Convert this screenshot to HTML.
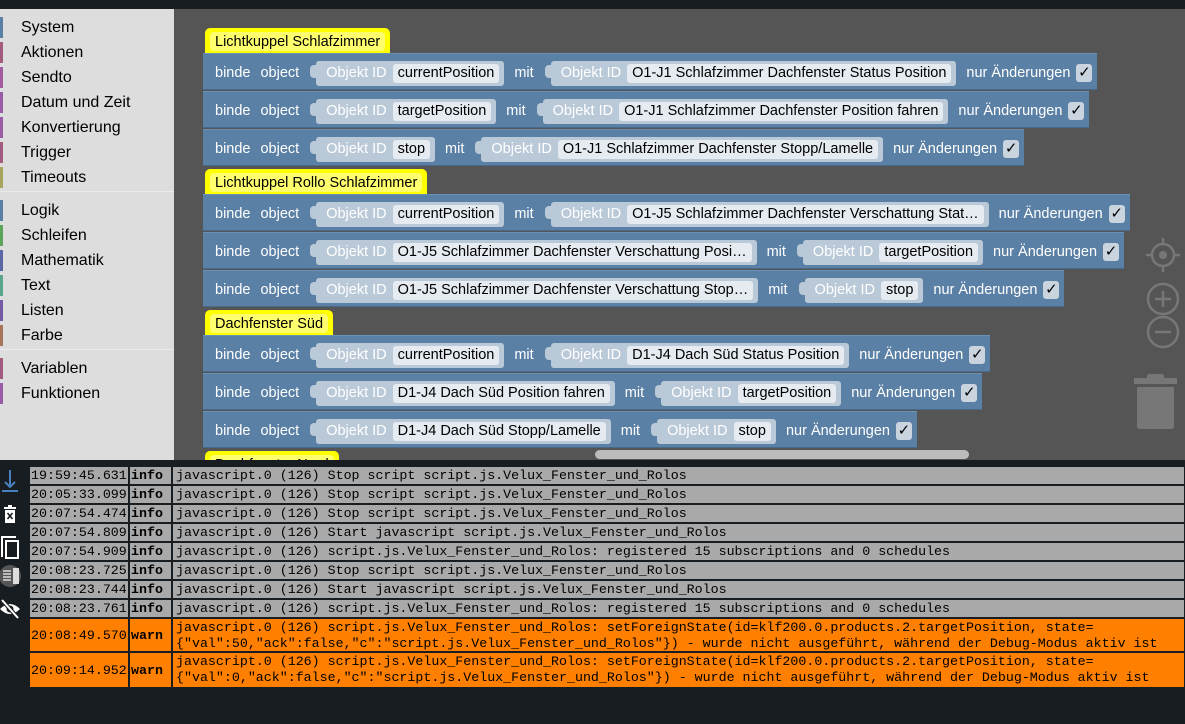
<!DOCTYPE html>
<html><head><meta charset="utf-8"><style>
*{margin:0;padding:0;box-sizing:border-box}
body{width:1185px;height:719px;overflow:hidden;background:#181d21;font-family:"Liberation Sans",Arial,sans-serif;position:relative}
#top{position:absolute;left:0;top:0;width:1185px;height:9px;background:#181d21}
#side{position:absolute;left:0;top:9px;width:174px;height:451px;background:#dddddd}
.it{position:absolute;left:0;height:25px;width:174px;font-size:16px;color:#000;line-height:25px;padding-left:21px}
.it i{position:absolute;left:0;top:2px;width:3px;height:21px}
.sep{position:absolute;left:0;width:174px;height:1px;background:#ebebeb}
#ws{position:absolute;left:174px;top:9px;width:1011px;height:451px;background:#555;overflow:hidden}
.hdr{position:absolute;height:25px;background:#ff0;border-radius:5px 5px 0 0;padding:4px 5px 2px;white-space:nowrap}
.hdr span{display:block;background:#ffff6e;border-radius:4px;height:19px;line-height:20px;padding:0 5px;font-size:14.5px;color:#000}
.row{position:absolute;left:29px;height:37px;background:#5b80a5;border-top:1px solid #6b90b5;border-bottom:1px solid #48698a;display:flex;align-items:center;padding-left:12px;padding-top:3px;color:#fff;font-size:14.5px;white-space:nowrap}
.row>*{flex-shrink:0}
.w{margin-right:10px}
.f{position:relative;height:25px;background:#bac9d8;border-radius:3px;display:flex;align-items:center;padding:0 5px 0 10px;margin-left:7px;margin-right:10px}
.f:before{content:"";position:absolute;left:-6px;top:4px;width:6px;height:13px;background:#bac9d8;border-radius:4px 0 0 4px}
.f b{font-weight:normal;color:#fff;margin-right:6px}
.f u{text-decoration:none;background:#e5ebf1;color:#000;border-radius:3px;padding:0 5px;height:19px;line-height:19px}
.ck{display:inline-block;width:16px;height:18px;background:#c9d4df;border-radius:3px;color:#000;font-size:15px;line-height:18px;text-align:center;margin-left:6px;margin-right:5px}
#scroll{position:absolute;left:421px;top:441px;width:374px;height:9px;background:#bbb;border-radius:5px}
#log{position:absolute;left:0;top:461px;width:1185px;height:258px;background:#181d21}
#icons{position:absolute;left:0;top:0;width:29px;height:258px;background:#181d21}
.lr{position:absolute;left:30px;display:flex;font-family:"Liberation Mono","Courier New",monospace;font-size:13.3px;color:#000}
.lr div{background:#a9a9a9;margin-right:2px;padding-left:1px;display:flex;align-items:center;white-space:pre;overflow:hidden}
.lr .t{width:98px}.lr .l{width:41px;font-weight:bold}.lr .m{width:1011px;margin-right:0;padding-left:3px}
.lr.wn div{background:#ff8000}
.lr.wn .m{line-height:16px;align-items:flex-start;padding-top:1px}
</style></head><body>
<div id="top"></div>
<div id="side">
<div class="it" style="top:6px"><i style="background:#5b80a5"></i>System</div>
<div class="it" style="top:31px"><i style="background:#a55b80"></i>Aktionen</div>
<div class="it" style="top:56px"><i style="background:#a55ba0"></i>Sendto</div>
<div class="it" style="top:81px"><i style="background:#995ba5"></i>Datum und Zeit</div>
<div class="it" style="top:106px"><i style="background:#9a5ba5"></i>Konvertierung</div>
<div class="it" style="top:131px"><i style="background:#a55b80"></i>Trigger</div>
<div class="it" style="top:156px"><i style="background:#a5a55b"></i>Timeouts</div>
<div class="sep" style="top:182px"></div>
<div class="it" style="top:189px"><i style="background:#5b80a5"></i>Logik</div>
<div class="it" style="top:214px"><i style="background:#5ba55b"></i>Schleifen</div>
<div class="it" style="top:239px"><i style="background:#5b67a5"></i>Mathematik</div>
<div class="it" style="top:264px"><i style="background:#5ba58c"></i>Text</div>
<div class="it" style="top:289px"><i style="background:#745ba5"></i>Listen</div>
<div class="it" style="top:314px"><i style="background:#a5745b"></i>Farbe</div>
<div class="sep" style="top:340px"></div>
<div class="it" style="top:347px"><i style="background:#a55b80"></i>Variablen</div>
<div class="it" style="top:372px"><i style="background:#995ba5"></i>Funktionen</div>
</div>
<div id="ws">
<div class="hdr" style="left:31px;top:19px"><span>Lichtkuppel Schlafzimmer</span></div>
<div class="row" style="top:44px"><span class="w">binde</span><span class="w">object</span><div class="f"><b>Objekt ID</b><u>currentPosition</u></div><span class="w">mit</span><div class="f"><b>Objekt ID</b><u>O1-J1 Schlafzimmer Dachfenster Status Position</u></div><span>nur Änderungen</span><span class="ck">✓</span></div>
<div class="row" style="top:82px"><span class="w">binde</span><span class="w">object</span><div class="f"><b>Objekt ID</b><u>targetPosition</u></div><span class="w">mit</span><div class="f"><b>Objekt ID</b><u>O1-J1 Schlafzimmer Dachfenster Position fahren</u></div><span>nur Änderungen</span><span class="ck">✓</span></div>
<div class="row" style="top:120px"><span class="w">binde</span><span class="w">object</span><div class="f"><b>Objekt ID</b><u>stop</u></div><span class="w">mit</span><div class="f"><b>Objekt ID</b><u>O1-J1 Schlafzimmer Dachfenster Stopp/Lamelle</u></div><span>nur Änderungen</span><span class="ck">✓</span></div>
<div class="hdr" style="left:31px;top:160px"><span>Lichtkuppel Rollo Schlafzimmer</span></div>
<div class="row" style="top:185px"><span class="w">binde</span><span class="w">object</span><div class="f"><b>Objekt ID</b><u>currentPosition</u></div><span class="w">mit</span><div class="f"><b>Objekt ID</b><u>O1-J5 Schlafzimmer Dachfenster Verschattung Stat…</u></div><span>nur Änderungen</span><span class="ck">✓</span></div>
<div class="row" style="top:223px"><span class="w">binde</span><span class="w">object</span><div class="f"><b>Objekt ID</b><u>O1-J5 Schlafzimmer Dachfenster Verschattung Posi…</u></div><span class="w">mit</span><div class="f"><b>Objekt ID</b><u>targetPosition</u></div><span>nur Änderungen</span><span class="ck">✓</span></div>
<div class="row" style="top:261px"><span class="w">binde</span><span class="w">object</span><div class="f"><b>Objekt ID</b><u>O1-J5 Schlafzimmer Dachfenster Verschattung Stop…</u></div><span class="w">mit</span><div class="f"><b>Objekt ID</b><u>stop</u></div><span>nur Änderungen</span><span class="ck">✓</span></div>
<div class="hdr" style="left:31px;top:301px"><span>Dachfenster Süd</span></div>
<div class="row" style="top:326px"><span class="w">binde</span><span class="w">object</span><div class="f"><b>Objekt ID</b><u>currentPosition</u></div><span class="w">mit</span><div class="f"><b>Objekt ID</b><u>D1-J4 Dach Süd Status Position</u></div><span>nur Änderungen</span><span class="ck">✓</span></div>
<div class="row" style="top:364px"><span class="w">binde</span><span class="w">object</span><div class="f"><b>Objekt ID</b><u>D1-J4 Dach Süd Position fahren</u></div><span class="w">mit</span><div class="f"><b>Objekt ID</b><u>targetPosition</u></div><span>nur Änderungen</span><span class="ck">✓</span></div>
<div class="row" style="top:402px"><span class="w">binde</span><span class="w">object</span><div class="f"><b>Objekt ID</b><u>D1-J4 Dach Süd Stopp/Lamelle</u></div><span class="w">mit</span><div class="f"><b>Objekt ID</b><u>stop</u></div><span>nur Änderungen</span><span class="ck">✓</span></div>
<div class="hdr" style="left:31px;top:442px"><span>Dachfenster Nord</span></div>
<div id="scroll"></div>
<svg style="position:absolute;left:972px;top:229px" width="34" height="120" viewBox="0 0 34 120">
<g fill="none" stroke="#777" stroke-width="2.5">
<circle cx="17" cy="17" r="11"/><line x1="17" y1="0" x2="17" y2="6"/><line x1="17" y1="28" x2="17" y2="34"/><line x1="0" y1="17" x2="6" y2="17"/><line x1="28" y1="17" x2="34" y2="17"/>
<circle cx="17" cy="61" r="15"/><line x1="9" y1="61" x2="25" y2="61"/><line x1="17" y1="53" x2="17" y2="69"/>
<circle cx="17" cy="94" r="15"/><line x1="9" y1="94" x2="25" y2="94"/>
</g>
<circle cx="17" cy="17" r="4" fill="#777"/>
</svg>
<svg style="position:absolute;left:960px;top:365px" width="43" height="56" viewBox="0 0 43 56">
<path d="M13 2q0-2 3-2h11q3 0 3 2v2h13v6H0V4h13z" fill="#777"/>
<path d="M3 13h37v39q0 3-3 3H6q-3 0-3-3z" fill="#777"/>
</svg>
</div>
<div id="log">
<div id="icons">
<svg width="29" height="258" viewBox="0 0 29 258">
<g stroke="#4a7fc0" stroke-width="2" fill="none"><line x1="10" y1="9" x2="10" y2="26"/><path d="M5 21l5 5 5-5"/><line x1="2" y1="30" x2="18" y2="30"/></g>
<path d="M4 46h12v2H4zM8 44h4v2H8zM5 49h10v13H5z" fill="#fff"/><path d="M7.5 52l5 6M12.5 52l-5 6" stroke="#181d21" stroke-width="1.6"/>
<path d="M2 96V76h14" stroke="#fff" stroke-width="2" fill="none"/><rect x="6" y="80" width="12" height="17" fill="none" stroke="#fff" stroke-width="2"/>
<circle cx="10" cy="115" r="11" fill="#555"/><path d="M3 110h8M3 113h8M3 116h8M3 119h8" stroke="#ddd" stroke-width="1.6"/><rect x="13" y="107" width="6" height="16" fill="#ddd"/>
<path d="M0 148q10-10 20 0q-10 10-20 0z" fill="#fff"/><circle cx="10" cy="148" r="3.5" fill="#181d21"/><line x1="2" y1="139" x2="18" y2="157" stroke="#181d21" stroke-width="4"/><line x1="2" y1="139" x2="18" y2="157" stroke="#fff" stroke-width="2"/>
</svg>
</div>
<div class="lr" style="top:6px;height:17px"><div class="t">19:59:45.631</div><div class="l">info</div><div class="m">javascript.0 (126) Stop script script.js.Velux_Fenster_und_Rolos</div></div>
<div class="lr" style="top:25px;height:17px"><div class="t">20:05:33.099</div><div class="l">info</div><div class="m">javascript.0 (126) Stop script script.js.Velux_Fenster_und_Rolos</div></div>
<div class="lr" style="top:44px;height:17px"><div class="t">20:07:54.474</div><div class="l">info</div><div class="m">javascript.0 (126) Stop script script.js.Velux_Fenster_und_Rolos</div></div>
<div class="lr" style="top:63px;height:17px"><div class="t">20:07:54.809</div><div class="l">info</div><div class="m">javascript.0 (126) Start javascript script.js.Velux_Fenster_und_Rolos</div></div>
<div class="lr" style="top:82px;height:17px"><div class="t">20:07:54.909</div><div class="l">info</div><div class="m">javascript.0 (126) script.js.Velux_Fenster_und_Rolos: registered 15 subscriptions and 0 schedules</div></div>
<div class="lr" style="top:101px;height:17px"><div class="t">20:08:23.725</div><div class="l">info</div><div class="m">javascript.0 (126) Stop script script.js.Velux_Fenster_und_Rolos</div></div>
<div class="lr" style="top:120px;height:17px"><div class="t">20:08:23.744</div><div class="l">info</div><div class="m">javascript.0 (126) Start javascript script.js.Velux_Fenster_und_Rolos</div></div>
<div class="lr" style="top:139px;height:17px"><div class="t">20:08:23.761</div><div class="l">info</div><div class="m">javascript.0 (126) script.js.Velux_Fenster_und_Rolos: registered 15 subscriptions and 0 schedules</div></div>
<div class="lr wn" style="top:158px;height:32px"><div class="t">20:08:49.570</div><div class="l">warn</div><div class="m">javascript.0 (126) script.js.Velux_Fenster_und_Rolos: setForeignState(id=klf200.0.products.2.targetPosition, state=
{"val":50,"ack":false,"c":"script.js.Velux_Fenster_und_Rolos"}) - wurde nicht ausgeführt, während der Debug-Modus aktiv ist</div></div>
<div class="lr wn" style="top:192px;height:34px"><div class="t">20:09:14.952</div><div class="l">warn</div><div class="m">javascript.0 (126) script.js.Velux_Fenster_und_Rolos: setForeignState(id=klf200.0.products.2.targetPosition, state=
{"val":0,"ack":false,"c":"script.js.Velux_Fenster_und_Rolos"}) - wurde nicht ausgeführt, während der Debug-Modus aktiv ist</div></div>
</div>
</body></html>
